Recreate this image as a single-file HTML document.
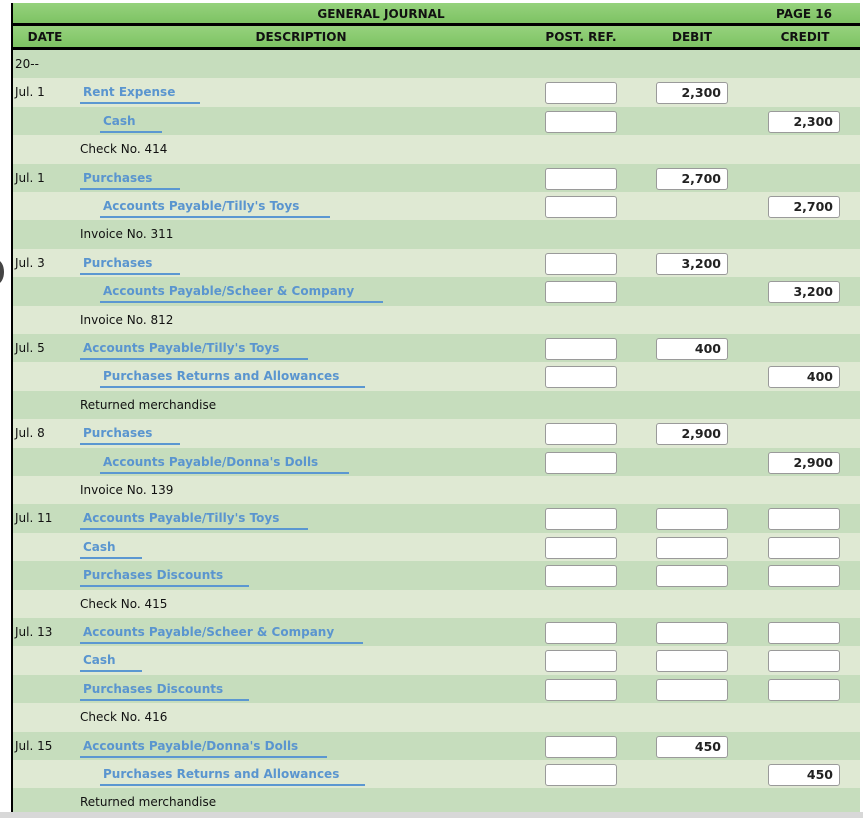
<!DOCTYPE html>
<html><head><style>
*{margin:0;padding:0;box-sizing:border-box}
body{width:863px;height:818px;background:#fff;position:relative;overflow:hidden;font-family:"DejaVu Sans","Liberation Sans",sans-serif;font-size:12px;color:#111}
.hd{position:absolute;left:11px;width:849px;background:linear-gradient(#96d27d,#7cc262);font-weight:bold;font-size:12px;color:#111}
.hd span{position:absolute;top:50%;transform:translate(-50%,-50%);white-space:nowrap}
.bl{position:absolute;left:11px;width:849px;height:3px;background:#000}
.r{position:absolute;left:11px;width:849px;height:29px}
.d{background:#c6ddbd}.l{background:#dfe9d3}
.dt{position:absolute;left:4px;top:7px;font-size:12px}
.a{position:absolute;top:7px;font-weight:bold;color:#5a95cf;font-size:12px;white-space:nowrap}
.u{position:absolute;height:2px;background:#5b97d1;top:24px}
.n{position:absolute;left:69px;top:7px;font-size:12px}
.b{position:absolute;top:4px;width:72px;height:22px;background:#fff;border:1px solid #9a9a9a;border-radius:3px;text-align:right;padding-right:6px;font-weight:bold;font-size:12.5px;line-height:20px;color:#222}
</style></head><body>
<div class="hd" style="top:3px;height:21px"><span style="left:370px">GENERAL JOURNAL</span><span style="left:793px">PAGE 16</span></div>
<div class="bl" style="top:23px"></div>
<div class="hd" style="top:26px;height:22px"><span style="left:34px">DATE</span><span style="left:290px">DESCRIPTION</span><span style="left:570px">POST. REF.</span><span style="left:681px">DEBIT</span><span style="left:794px">CREDIT</span></div>
<div class="bl" style="top:47px"></div>
<div style="position:absolute;left:-10px;top:260px;width:14px;height:24px;border-radius:50%;background:#444"></div>
<div id="rows"></div>
<div style="position:absolute;left:0;top:812px;width:863px;height:6px;background:#d8d8d8"></div>
<div style="position:absolute;left:11px;top:3px;width:2px;height:809px;background:#000;z-index:5"></div>
<script>
var R=[
['d','20--'],
['a','Jul. 1','Rent Expense',0,120,'','2,300',null],
['a','','Cash',1,62,'',null,'2,300'],
['n','Check No. 414'],
['a','Jul. 1','Purchases',0,100,'','2,700',null],
['a','',"Accounts Payable/Tilly's Toys",1,230,'',null,'2,700'],
['n','Invoice No. 311'],
['a','Jul. 3','Purchases',0,100,'','3,200',null],
['a','','Accounts Payable/Scheer &amp; Company',1,283,'',null,'3,200'],
['n','Invoice No. 812'],
['a','Jul. 5',"Accounts Payable/Tilly's Toys",0,228,'','400',null],
['a','','Purchases Returns and Allowances',1,265,'',null,'400'],
['n','Returned merchandise'],
['a','Jul. 8','Purchases',0,100,'','2,900',null],
['a','',"Accounts Payable/Donna's Dolls",1,249,'',null,'2,900'],
['n','Invoice No. 139'],
['a','Jul. 11',"Accounts Payable/Tilly's Toys",0,228,'','',''],
['a','','Cash',0,62,'','',''],
['a','','Purchases Discounts',0,169,'','',''],
['n','Check No. 415'],
['a','Jul. 13','Accounts Payable/Scheer &amp; Company',0,283,'','',''],
['a','','Cash',0,62,'','',''],
['a','','Purchases Discounts',0,169,'','',''],
['n','Check No. 416'],
['a','Jul. 15',"Accounts Payable/Donna's Dolls",0,247,'','450',null],
['a','','Purchases Returns and Allowances',1,265,'',null,'450'],
['n','Returned merchandise']];
var h='';
R.forEach(function(r,i){
 var top=50+i*28.4;
 h+='<div class="r '+(i%2?'l':'d')+'" style="top:'+top+'px">';
 if(r[0]=='d')h+='<div class="dt">'+r[1]+'</div>';
 else if(r[0]=='n')h+='<div class="n">'+r[1]+'</div>';
 else{
  h+='<div class="dt">'+r[1]+'</div>';
  var x=r[3]?92:72;
  h+='<div class="a" style="left:'+x+'px">'+r[2]+'</div><div class="u" style="left:'+(x-3)+'px;width:'+r[4]+'px"></div>';
  h+='<div class="b" style="left:534px"></div>';
  if(r[6]!==null)h+='<div class="b" style="left:645px">'+r[6]+'</div>';
  if(r[7]!==null)h+='<div class="b" style="left:757px">'+r[7]+'</div>';
 }
 h+='</div>';
});
document.getElementById('rows').innerHTML=h;
</script>
</body></html>
